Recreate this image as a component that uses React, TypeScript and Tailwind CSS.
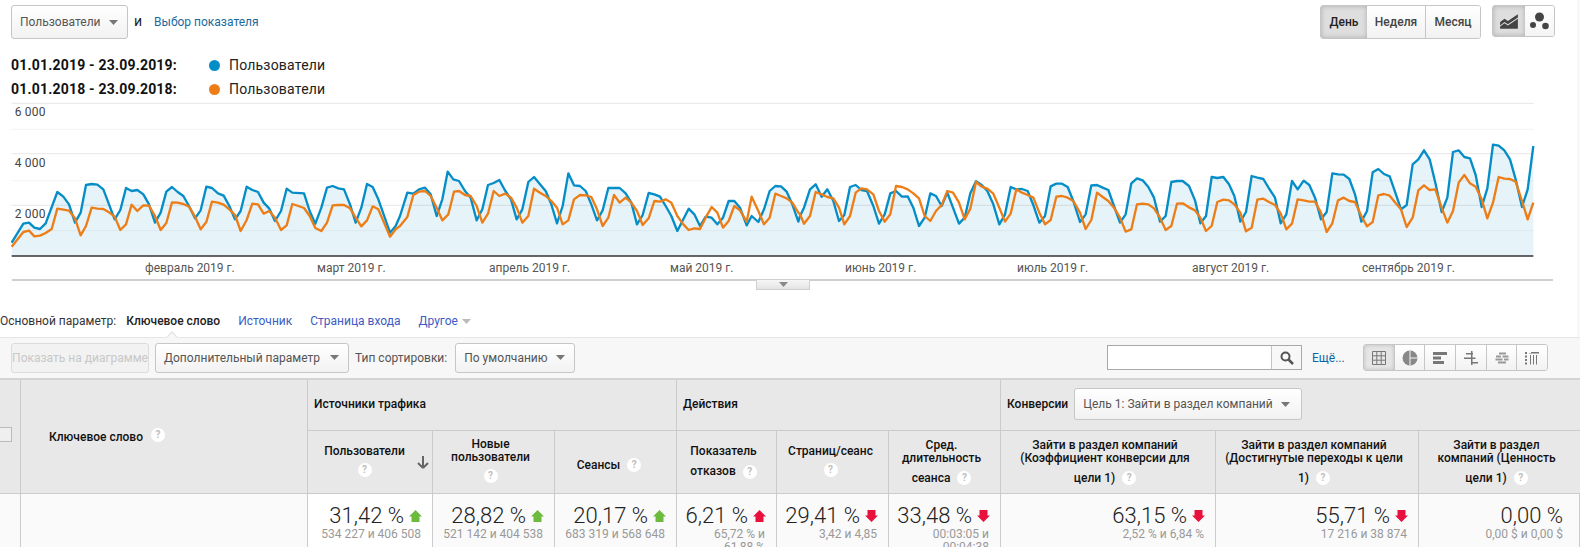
import React from 'react';

// точки сняты с графика: x и y в масштабе 3:1 от страницы (y считается от 100px)
const blueA = [35,425,70,368,87,365,103,380,120,384,137,367,172,273,190,287,207,310,225,365,242,335,258,252,275,249,292,251,310,265,327,310,344,355,361,327,378,261,395,270,412,267,430,280,447,310,465,365,482,335,499,272,516,258,533,273,550,285,567,315,585,352,602,328,619,257,636,261,654,277,671,284,688,315,705,355,722,330,740,257,757,267,774,273,791,305,808,323,825,360,843,330,860,263,877,275,912,277,929,330,946,368,964,320,981,260,998,255,1015,262,1032,265,1050,310,1067,365,1084,320,1101,249,1118,258,1135,295,1170,395,1187,375];
const blueB = [0,345,22,275,40,278,57,265,75,260,92,280,110,345,127,295,143,212,160,235,177,240,195,270,212,290,230,358,247,325,264,252,281,246,298,237,316,270,333,295,350,355,367,325,385,243,402,228,420,250,437,270,454,310,471,367,488,315,505,217,522,253,540,255,557,270,574,310,591,358,608,328,625,261,642,261,659,261,677,277,694,305,711,370,728,342,746,276,763,280,780,287,797,315,814,345,832,390,866,323,883,340,900,375,917,347,935,350,952,370,969,350,986,300,1003,300,1020,320,1040,373,1055,345,1075,363,1092,325,1109,270,1126,255,1143,256,1160,272,1177,310,1195,362];
const blueC = [0,345,12,320,30,265,47,250,65,287,82,265,100,300,117,360,133,342,150,258,167,252,184,267,201,270,220,315,237,368,254,340,271,277,288,270,306,287,323,286,340,320,357,375,374,350,391,277,408,285,425,315,442,275,459,320,477,368,494,350,511,277,528,241,545,252,562,270,580,310,598,370,615,340,632,258,649,265,666,264,683,270,700,312,718,365,735,345,752,256,769,248,786,248,803,258,820,300,840,363,857,340,874,253,891,252,908,260,925,267,942,315,960,365,977,340,994,247,1011,232,1028,238,1045,258,1062,290,1080,362,1097,345,1114,243,1131,240,1148,240];
const blueD = [27,255,45,298,61,367,78,345,95,228,112,231,130,228,147,250,163,285,181,362,198,333,215,225,232,230,250,234,267,262,285,290,302,367,319,340,336,240,353,265,371,239,388,252,405,290,423,355,440,333,457,217,474,220,491,221,508,234,525,280,544,362,561,330,578,214,595,204,612,219,629,226,646,275,663,325,680,312,698,190,715,175,732,148,749,175,766,245,785,333,802,290,819,153,836,148,853,168,870,172,887,222,905,318,922,262,939,131,956,134,973,148,990,175,1007,235,1026,318,1043,265,1060,135];
const orangeA = [35,437,70,393,87,389,103,406,120,404,137,396,155,384,172,323,190,326,207,329,225,352,242,403,258,375,275,320,292,323,310,324,327,334,344,347,361,387,378,370,395,311,412,330,430,313,447,314,465,345,482,387,499,366,516,304,533,305,550,309,567,317,585,347,602,385,619,363,636,302,654,305,671,311,688,325,705,342,722,390,740,357,757,308,774,310,791,338,808,330,825,350,843,387,860,373,877,309,895,315,912,321,929,345,946,381,964,390,981,365,998,313,1015,312,1032,312,1050,322,1067,350,1084,376,1101,358,1118,316,1135,325,1170,407,1187,385];
const orangeB = [0,375,22,348,40,282,57,272,75,270,92,285,110,320,127,358,145,340,162,272,177,270,195,282,212,285,230,315,247,365,264,338,281,270,298,285,316,278,333,290,350,320,367,365,385,345,402,263,420,275,437,285,454,300,471,320,488,370,505,358,522,295,540,282,557,283,574,288,591,325,608,375,625,350,642,282,659,305,677,290,694,305,711,330,728,372,746,352,763,300,780,302,797,295,814,305,832,345,850,370,866,387,883,382,900,384,917,350,935,318,952,335,969,380,986,360,1003,315,1020,328,1040,362,1055,287,1075,330,1092,370,1109,350,1126,278,1143,285,1160,292,1177,305,1195,335];
const orangeC = [0,340,12,368,30,345,47,273,65,280,82,288,100,292,117,320,133,370,150,345,167,275,184,262,201,265,220,280,237,330,254,362,271,340,288,255,306,258,323,265,340,277,357,292,374,345,391,360,408,330,425,312,442,270,459,275,477,305,494,355,511,323,528,243,545,257,562,263,580,278,598,320,615,362,632,338,649,265,666,275,683,282,700,290,718,335,735,370,752,357,769,287,786,285,803,290,820,300,840,335,857,384,874,357,891,275,908,288,925,300,942,320,960,350,977,392,994,385,1011,310,1028,308,1045,310,1062,322,1080,350,1097,387,1114,375,1131,308,1148,307];
const orangeD = [27,319,45,328,61,350,78,390,95,375,112,303,130,296,147,298,163,310,181,335,198,391,215,380,232,296,250,293,267,303,285,312,302,337,319,385,336,368,353,295,371,298,388,302,405,302,423,335,440,393,457,367,474,298,491,290,508,300,525,303,544,345,561,376,578,363,595,283,612,279,629,284,646,305,663,325,680,378,698,350,715,268,732,253,749,267,766,265,785,320,802,365,819,330,836,245,853,222,870,247,887,257,905,295,922,352,939,305,956,228,973,233,990,234,1007,242,1026,300,1043,355,1060,305];

function join(parts: [number[], number][]) {
  const out: string[] = [];
  parts.forEach(([arr, dx]) => {
    for (let i = 0; i < arr.length; i += 2) out.push(`${arr[i] + dx},${arr[i + 1]}`);
  });
  return out.join(' ');
}

const bluePoints = join([[blueA, 0], [blueB, 1200], [blueC, 2400], [blueD, 3540]]);
const orangePoints = join([[orangeA, 0], [orangeB, 1200], [orangeC, 2400], [orangeD, 3540]]);

const months: [string, number][] = [
  ['февраль 2019 г.', 435],
  ['март 2019 г.', 951],
  ['апрель 2019 г.', 1467],
  ['май 2019 г.', 2010],
  ['июнь 2019 г.', 2535],
  ['июль 2019 г.', 3051],
  ['август 2019 г.', 3576],
  ['сентябрь 2019 г.', 4086],
];

function Caret({ color = '#777' }: { color?: string }) {
  return (
    <svg width="9" height="5" viewBox="0 0 9 5" className="shrink-0">
      <path d="M0 0h9L4.5 5z" fill={color} />
    </svg>
  );
}

function Q() {
  return (
    <span className="inline-flex w-[14px] h-[14px] rounded-full bg-white text-[#bdbdbd] text-[10px] leading-none font-bold items-center justify-center shrink-0">
      ?
    </span>
  );
}

function Arrow({ up, color }: { up: boolean; color: string }) {
  return (
    <svg width="13" height="12" viewBox="0 0 13 12" className="shrink-0">
      <path d={up ? 'M6.5 0L13 6.5h-2.500V12h-8V6.500H0z' : 'M6.500 12L13 5.500h-2.500V0h-8v5.500H0z'} fill={color} />
    </svg>
  );
}

const btn = 'flex items-center border border-[#c6c6c6] rounded-[3px] bg-linear-to-b from-white to-[#f2f2f2] text-[12px] text-[#555]';

function Head({ lines, tail, className = 'pr-[6px]' }: { lines: string[]; tail?: string; className?: string }) {
  return (
    <div className={`bg-[#e8e8e8] border-r border-b border-[#cbcbcb] flex flex-col items-center justify-center text-center text-[12px] font-medium leading-[13px] text-[#111] ${tail ? 'pt-[6px]' : 'pt-[2px]'} ${className}`}>
      {lines.map((l) => (
        <div key={l}>{l}</div>
      ))}
      <div className={`flex items-center justify-center gap-[7px] ${tail ? 'h-[27px]' : 'h-[24px]'}`}>
        {tail && <span>{tail}</span>}
        <Q />
      </div>
    </div>
  );
}

function Cell({ value, sub, arrow, white, last }: { value: string; sub: string[]; arrow?: 'up-green' | 'up-red' | 'down-red'; white?: boolean; last?: boolean }) {
  return (
    <div className={`border-r border-[#cbcbcb] pt-[9px] text-right overflow-hidden ${white ? 'bg-white' : 'bg-[#fafafa]'} ${last ? 'pr-[16px]' : 'pr-[11px]'}`}>
      <div className={`flex items-center justify-end gap-[5px] text-[22px] leading-[25px] font-light text-[#222] ${last ? '' : '-mr-px'}`}>
        <span>{value}</span>
        {arrow === 'up-green' && <Arrow up color="#6cbb3c" />}
        {arrow === 'up-red' && <Arrow up color="#e8103c" />}
        {arrow === 'down-red' && <Arrow up={false} color="#e8103c" />}
      </div>
      <div className="text-[12px] leading-[13px] text-[#999]">
        {sub.map((s) => (
          <div key={s}>{s}</div>
        ))}
      </div>
    </div>
  );
}

function ViewIcon({ n }: { n: number }) {
  const c = '#777';
  return (
    <svg width="16" height="16" viewBox="0 0 16 16">
      {n === 0 && <path d="M1.500 1.500h13v13h-13zM1.500 5.800h13M1.500 10.200h13M5.800 1.500v13M10.200 1.500v13" fill="none" stroke={c} strokeWidth="1" />}
      {n === 1 && (
        <>
          <circle cx="8" cy="8" r="7.500" fill="#888" />
          <path d="M8 0.500v15M8 8h7.500" fill="none" stroke="#f4f4f4" strokeWidth="1" />
        </>
      )}
      {n === 2 && <path d="M1 2h14v3H1zM1 6.500h8v3H1zM1 11h11v3H1z" fill={c} />}
      {n === 3 && <path d="M3 3h7v1.500H3zM8 1h1.500v14H8zM1 7.500h7V9H1zM8 12h7v1.500H8zM9.500 7.500h3V9h-3z" fill={c} />}
      {n === 4 && <path d="M5 2.500h7v2H5zM2 5.500h5v2H2zM8.500 5.500h6v2h-6zM1.500 8.500h7v2h-7zM10 8.500h4.500v2H10zM4 11.500h8v2H4z" fill="#999" />}
      {n === 5 && <path d="M1 2h2v2H1zM1 5.500h2v2H1zM1 9h2v2H1zM1 12.500h2v2H1zM5 2h10v1.500H5zM6 5v9.500h1V5zM9 5v9.500h1V5zM12 5v9.500h1V5zM5 2v2h2V2z" fill={c} />}
    </svg>
  );
}

export default function App() {
  return (
    <div className="w-[1580px] h-[547px] overflow-hidden bg-white font-['Roboto',sans-serif] text-[12px] text-[#333]">
      <div className="border-r-[3px] border-[#f8f8f8] h-[337px]">
        {/* верх: показатель и переключатели */}
        <div className="flex items-start justify-between h-[52px] pt-[5px] pl-[11px] pr-[22px]">
          <div className="flex items-start">
            <div className={`${btn} w-[117px] h-[34px] pl-[8px] pr-[9px] justify-between`}>
              <span>Пользователи</span>
              <Caret />
            </div>
            <span className="ml-[6px] mt-[6px] text-[14px] leading-[20px] text-[#222]">и</span>
            <span className="ml-[12px] mt-[8px] text-[#1a6a9e]">Выбор показателя</span>
          </div>
          <div className="flex items-start gap-[11px]">
            <div className="flex h-[34px] w-[161px] border border-[#c6c6c6] rounded-[3px] overflow-hidden text-[12px] font-medium text-[#444]">
              <div className="w-[46px] flex items-center justify-center bg-[#dedede] shadow-[inset_0_0_5px_#aaa] text-[#222]">День</div>
              <div className="w-[59px] flex items-center justify-center border-r border-[#c6c6c6] bg-linear-to-b from-white to-[#f2f2f2]">Неделя</div>
              <div className="flex-1 flex items-center justify-center bg-linear-to-b from-white to-[#f2f2f2]">Месяц</div>
            </div>
            <div className="flex h-[32px] w-[63px] border border-[#c6c6c6] rounded-[3px] overflow-hidden">
              <div className="w-[32px] flex items-center justify-center bg-[#dedede] shadow-[inset_0_0_5px_#aaa]">
                <svg width="20" height="17" viewBox="0 0 18 15">
                  <path d="M1 8l4-3 3 2 9-6v3L8 10 5 8l-4 3zM1 12l4-3 3 2 9-6v9H1z" fill="#444" />
                </svg>
              </div>
              <div className="flex-1 flex items-center justify-center bg-linear-to-b from-white to-[#f4f4f4]">
                <svg width="19" height="18" viewBox="0 0 19 18">
                  <circle cx="9.500" cy="5" r="4.500" fill="#444" />
                  <circle cx="3" cy="13" r="3" fill="#444" />
                  <circle cx="15.500" cy="14" r="3.300" fill="#444" />
                </svg>
              </div>
            </div>
          </div>
        </div>

        {/* легенда */}
        <div className="h-[48px] pl-[11px] text-[14px] text-[#222]">
          <div className="flex items-center h-[24px] mt-px">
            <span className="w-[198px] font-bold tracking-[0.2px] text-[#111]">01.01.2019 - 23.09.2019:</span>
            <span className="w-[11px] h-[11px] rounded-full bg-[#058dc7]" />
            <span className="ml-[9px] tracking-[0.2px]">Пользователи</span>
          </div>
          <div className="flex items-center h-[24px]">
            <span className="w-[198px] font-bold tracking-[0.2px] text-[#111]">01.01.2018 - 23.09.2018:</span>
            <span className="w-[11px] h-[11px] rounded-full bg-[#ed7e17]" />
            <span className="ml-[9px] tracking-[0.2px]">Пользователи</span>
          </div>
        </div>

        {/* график */}
        <svg width="1580" height="178" viewBox="0 0 4740 534" className="block">
          <polygon points={`35,465 ${bluePoints} 4600,465`} fill="#e6f3f9" />
          {[7, 158, 313].map((y) => (
            <line key={y} x1="35" x2="4602" y1={y} y2={y} stroke="#000" strokeWidth="4" opacity="0.07" />
          ))}
          {[85, 239, 389].map((y) => (
            <line key={y} x1="35" x2="4602" y1={y} y2={y} stroke="#000" strokeWidth="3" opacity="0.04" />
          ))}
          <polyline points={bluePoints} fill="none" stroke="#058dc7" strokeWidth="7" strokeLinejoin="round" />
          <polyline points={orangePoints} fill="none" stroke="#ed7e17" strokeWidth="7" strokeLinejoin="round" />
          <line x1="35" x2="4600" y1="465" y2="465" stroke="#333" strokeWidth="4" />
          <g fontSize="36" fill="#444" fontFamily="Roboto, sans-serif" letterSpacing="0.6">
            <text x="44" y="44">6 000</text>
            <text x="44" y="197">4 000</text>
            <text x="44" y="350">2 000</text>
          </g>
          <g fontSize="36" fill="#555" fontFamily="Roboto, sans-serif">
            {months.map(([t, x]) => (
              <text key={t} x={x} y="513">{t}</text>
            ))}
          </g>
        </svg>
        <div className="ml-[12px] w-[1541px] h-[2px] bg-[#cfcfcf]" />
        <div className="ml-[756px] w-[54px] h-[10px] -mt-px flex items-center justify-center bg-linear-to-b from-[#f6f6f6] to-[#e4e4e4] border-x border-b border-[#cfcfcf]">
          <Caret color="#888" />
        </div>

        {/* основной параметр */}
        <div className="flex items-center h-[16px] mt-[23px]">
          <span className="text-[#333]">Основной параметр:</span>
          <span className="ml-[10px] font-medium text-[#222]">Ключевое слово</span>
          <span className="ml-[18px] text-[#3b5cc4]">Источник</span>
          <span className="ml-[18px] text-[#3b5cc4]">Страница входа</span>
          <span className="ml-[18px] text-[#3b5cc4]">Другое</span>
          <span className="ml-[4px]"><Caret color="#bbb" /></span>
        </div>
      </div>

      {/* панель инструментов таблицы */}
      <div className="relative flex items-center justify-between h-[43px] pb-px bg-[#f7f7f7] border-t border-b-2 border-t-[#e6e6e6] border-b-[#d4d4d4] pl-[11px] pr-[32px]">
        <span className="absolute left-[168px] -top-[5px] w-[8px] h-[8px] rotate-45 bg-[#f7f7f7] border-l border-t border-[#e0e0e0]" />
        <div className="flex items-center">
          <div className="w-[138px] h-[30px] flex items-center justify-center border border-[#dcdcdc] rounded-[3px] bg-[#f2f2f2] text-[#c8c8c8] whitespace-nowrap">Показать на диаграмме</div>
          <div className={`${btn} ml-[6px] w-[194px] h-[30px] pl-[8px] pr-[9px] justify-between`}>
            <span>Дополнительный параметр</span>
            <Caret />
          </div>
          <span className="ml-[6px] text-[#555]">Тип сортировки:</span>
          <div className={`${btn} ml-[8px] w-[120px] h-[30px] pl-[8px] pr-[9px] justify-between`}>
            <span>По умолчанию</span>
            <Caret />
          </div>
        </div>
        <div className="flex items-center">
          <div className="flex w-[195px] h-[25px] border border-[#a8a8a8] bg-white">
            <div className="flex-1" />
            <div className="w-[30px] flex items-center justify-center border-l border-[#c6c6c6] bg-[#f8f8f8]">
              <svg width="14" height="14" viewBox="0 0 14 14">
                <circle cx="5.500" cy="5.500" r="4" fill="none" stroke="#555" strokeWidth="2" />
                <path d="M8.500 8.500L13 13" stroke="#555" strokeWidth="2.500" />
              </svg>
            </div>
          </div>
          <span className="ml-[10px] w-[51px] text-[#0b66a8]">Ещё...</span>
          <div className="flex h-[27px] w-[185px] border border-[#c6c6c6] rounded-[3px] overflow-hidden">
            {[0, 1, 2, 3, 4, 5].map((n) => (
              <div key={n} className={`flex-1 flex items-center justify-center ${n < 5 ? 'border-r border-[#c6c6c6]' : ''} ${n === 0 ? 'bg-[#e6e6e6] shadow-[inset_0_0_4px_#bbb]' : 'bg-linear-to-b from-white to-[#f2f2f2]'}`}>
                <ViewIcon n={n} />
              </div>
            ))}
          </div>
        </div>
      </div>

      {/* таблица */}
      <div className="grid grid-cols-[21px_287px_125px_122px_122px_100px_112px_112px_215px_203px_161px] grid-rows-[51px_63px_60px]">
        <div className="row-span-2 bg-[#e8e8e8] border-r border-b border-[#cbcbcb] pt-[47px]">
          <div className="w-[13px] h-[15px] -ml-px border border-[#bbb] bg-[#efefef]" />
        </div>
        <div className="row-span-2 bg-[#e8e8e8] border-r border-b border-[#cbcbcb] pl-[28px] pt-[48px] font-medium text-[#111] flex items-start gap-[8px]">
          <span>Ключевое слово</span>
          <Q />
        </div>
        <div className="col-span-3 bg-[#e8e8e8] border-r border-b border-[#cbcbcb] pl-[6px] pb-[3px] flex items-center font-medium text-[#111]">Источники трафика</div>
        <div className="col-span-3 bg-[#e8e8e8] border-r border-b border-[#cbcbcb] pl-[6px] pb-[3px] flex items-center font-medium text-[#111]">Действия</div>
        <div className="col-span-3 bg-[#e8e8e8] border-b border-[#cbcbcb] pl-[6px] pb-[2px] flex items-center font-medium text-[#111]">
          <span>Конверсии</span>
          <div className={`${btn} ml-[6px] w-[228px] h-[32px] pl-[8px] pr-[11px] justify-between font-normal`}>
            <span>Цель 1: Зайти в раздел компаний</span>
            <Caret />
          </div>
        </div>

        <div className="relative bg-[#e8e8e8] border-r border-b border-[#cbcbcb] flex flex-col items-center justify-center text-center font-medium leading-[13px] text-[#111] pr-[11px] pt-[2px]">
          <div>Пользователи</div>
          <div className="flex items-center h-[24px]"><Q /></div>
          <svg width="12" height="14" viewBox="0 0 12 14" className="absolute right-[3px] top-[24px]">
            <path d="M6 13L1 8M6 13l5-5M6 13V1" fill="none" stroke="#666" strokeWidth="2" />
          </svg>
        </div>
        <Head lines={['Новые', 'пользователи']} />
        <Head lines={[]} tail="Сеансы" className="pr-[13px]" />
        <Head lines={['Показатель']} tail="отказов" />
        <Head lines={['Страниц/сеанс']} className="pr-[4px]" />
        <Head lines={['Сред.', 'длительность']} tail="сеанса" />
        <Head lines={['Зайти в раздел компаний', '(Коэффициент конверсии для']} tail="цели 1)" />
        <Head lines={['Зайти в раздел компаний', '(Достигнутые переходы к цели']} tail="1)" />
        <Head lines={['Зайти в раздел', 'компаний (Ценность']} tail="цели 1)" className="pr-[6px] border-r-0" />

        <div className="bg-[#fafafa] border-r border-[#cbcbcb]" />
        <div className="bg-[#fafafa] border-r border-[#cbcbcb]" />
        <Cell value="31,42 %" sub={['534 227 и 406 508']} arrow="up-green" white />
        <Cell value="28,82 %" sub={['521 142 и 404 538']} arrow="up-green" />
        <Cell value="20,17 %" sub={['683 319 и 568 648']} arrow="up-green" />
        <Cell value="6,21 %" sub={['65,72 % и', '61,88 %']} arrow="up-red" />
        <Cell value="29,41 %" sub={['3,42 и 4,85']} arrow="down-red" />
        <Cell value="33,48 %" sub={['00:03:05 и', '00:04:38']} arrow="down-red" />
        <Cell value="63,15 %" sub={['2,52 % и 6,84 %']} arrow="down-red" />
        <Cell value="55,71 %" sub={['17 216 и 38 874']} arrow="down-red" />
        <Cell value="0,00 %" sub={['0,00 $ и 0,00 $']} last />
      </div>
    </div>
  );
}
